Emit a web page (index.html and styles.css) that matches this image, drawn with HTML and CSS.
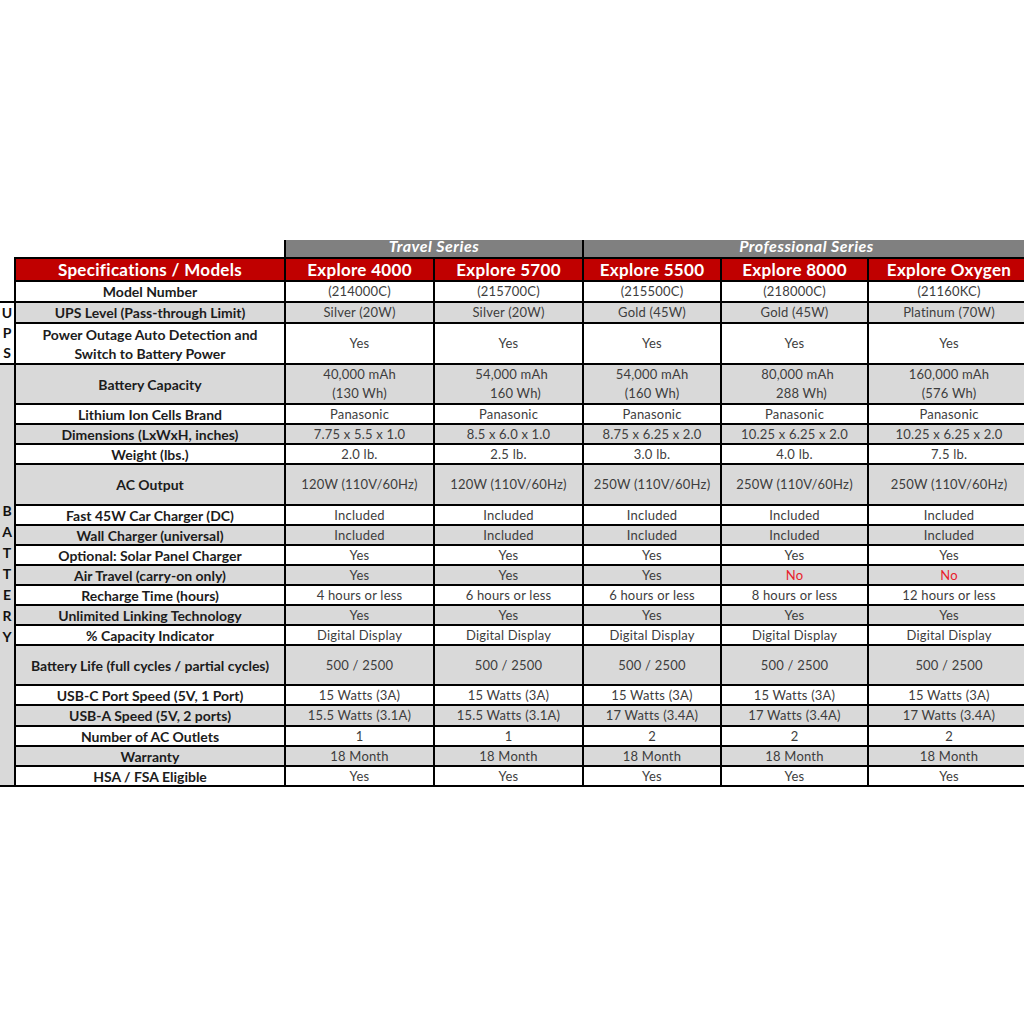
FILE: index.html
```html
<!DOCTYPE html>
<html lang="en">
<head>
<meta charset="utf-8">
<title>Explore Series Specifications</title>
<link rel="stylesheet" href="styles.css">
</head>
<body>
<table class="spec">
  <colgroup>
    <col class="c-side">
    <col class="c-label">
    <col class="c-a">
    <col class="c-b">
    <col class="c-c">
    <col class="c-d">
    <col class="c-e">
  </colgroup>
  <tr class="series">
    <td class="blank" colspan="2"></td>
    <td class="series-cell" colspan="2">Travel Series</td>
    <td class="series-cell" colspan="3">Professional Series</td>
  </tr>
  <tr class="models">
    <td class="blank"></td>
    <th>Specifications / Models</th>
    <th>Explore 4000</th>
    <th>Explore 5700</th>
    <th>Explore 5500</th>
    <th>Explore 8000</th>
    <th>Explore Oxygen</th>
  </tr>
  <tr class="w h21">
    <td class="blank"></td>
    <td class="label">Model Number</td>
    <td>(214000C)</td><td>(215700C)</td><td>(215500C)</td><td>(218000C)</td><td>(21160KC)</td>
  </tr>
  <tr class="g h21">
    <td class="side side-ups" rowspan="2">U<br>P<br>S</td>
    <td class="label">UPS Level (Pass-through Limit)</td>
    <td>Silver (20W)</td><td>Silver (20W)</td><td>Gold (45W)</td><td>Gold (45W)</td><td>Platinum (70W)</td>
  </tr>
  <tr class="w h40">
    <td class="label two">Power Outage Auto Detection and<br>Switch to Battery Power</td>
    <td>Yes</td><td>Yes</td><td>Yes</td><td>Yes</td><td>Yes</td>
  </tr>
  <tr class="g h40">
    <td class="side side-bat" rowspan="18">B<br>A<br>T<br>T<br>E<br>R<br>Y</td>
    <td class="label">Battery Capacity</td>
    <td class="two">40,000 mAh<br>(130 Wh)</td>
    <td class="two shift">54,000 mAh<br><span class="indent">160 Wh)</span></td>
    <td class="two">54,000 mAh<br>(160 Wh)</td>
    <td class="two shift">80,000 mAh<br><span class="indent">288 Wh)</span></td>
    <td class="two">160,000 mAh<br>(576 Wh)</td>
  </tr>
  <tr class="w h20">
    <td class="label">Lithium Ion Cells Brand</td>
    <td>Panasonic</td><td>Panasonic</td><td>Panasonic</td><td>Panasonic</td><td>Panasonic</td>
  </tr>
  <tr class="g h20">
    <td class="label">Dimensions (LxWxH, inches)</td>
    <td>7.75 x 5.5 x 1.0</td><td>8.5 x 6.0 x 1.0</td><td>8.75 x 6.25 x 2.0</td><td>10.25 x 6.25 x 2.0</td><td>10.25 x 6.25 x 2.0</td>
  </tr>
  <tr class="w h20">
    <td class="label">Weight (lbs.)</td>
    <td>2.0 lb.</td><td>2.5 lb.</td><td>3.0 lb.</td><td>4.0 lb.</td><td>7.5 lb.</td>
  </tr>
  <tr class="g h41">
    <td class="label">AC Output</td>
    <td>120W (110V/60Hz)</td><td>120W (110V/60Hz)</td><td>250W (110V/60Hz)</td><td>250W (110V/60Hz)</td><td>250W (110V/60Hz)</td>
  </tr>
  <tr class="w h20">
    <td class="label">Fast 45W Car Charger (DC)</td>
    <td>Included</td><td>Included</td><td>Included</td><td>Included</td><td>Included</td>
  </tr>
  <tr class="g h20">
    <td class="label">Wall Charger (universal)</td>
    <td>Included</td><td>Included</td><td>Included</td><td>Included</td><td>Included</td>
  </tr>
  <tr class="w h20">
    <td class="label">Optional: Solar Panel Charger</td>
    <td>Yes</td><td>Yes</td><td>Yes</td><td>Yes</td><td>Yes</td>
  </tr>
  <tr class="g h20">
    <td class="label">Air Travel (carry-on only)</td>
    <td>Yes</td><td>Yes</td><td>Yes</td><td class="no">No</td><td class="no">No</td>
  </tr>
  <tr class="w h20">
    <td class="label">Recharge Time (hours)</td>
    <td>4 hours or less</td><td>6 hours or less</td><td>6 hours or less</td><td>8 hours or less</td><td>12 hours or less</td>
  </tr>
  <tr class="g h20">
    <td class="label">Unlimited Linking Technology</td>
    <td>Yes</td><td>Yes</td><td>Yes</td><td>Yes</td><td>Yes</td>
  </tr>
  <tr class="w h20">
    <td class="label">% Capacity Indicator</td>
    <td>Digital Display</td><td>Digital Display</td><td>Digital Display</td><td>Digital Display</td><td>Digital Display</td>
  </tr>
  <tr class="g h40">
    <td class="label">Battery Life (full cycles / partial cycles)</td>
    <td>500 / 2500</td><td>500 / 2500</td><td>500 / 2500</td><td>500 / 2500</td><td>500 / 2500</td>
  </tr>
  <tr class="w h20">
    <td class="label">USB-C Port Speed (5V, 1 Port)</td>
    <td>15 Watts (3A)</td><td>15 Watts (3A)</td><td>15 Watts (3A)</td><td>15 Watts (3A)</td><td>15 Watts (3A)</td>
  </tr>
  <tr class="g h21">
    <td class="label">USB-A Speed (5V, 2 ports)</td>
    <td>15.5 Watts (3.1A)</td><td>15.5 Watts (3.1A)</td><td>17 Watts (3.4A)</td><td>17 Watts (3.4A)</td><td>17 Watts (3.4A)</td>
  </tr>
  <tr class="w h20">
    <td class="label">Number of AC Outlets</td>
    <td>1</td><td>1</td><td>2</td><td>2</td><td>2</td>
  </tr>
  <tr class="g h20">
    <td class="label">Warranty</td>
    <td>18 Month</td><td>18 Month</td><td>18 Month</td><td>18 Month</td><td>18 Month</td>
  </tr>
  <tr class="w h20">
    <td class="label">HSA / FSA Eligible</td>
    <td>Yes</td><td>Yes</td><td>Yes</td><td>Yes</td><td>Yes</td>
  </tr>
</table>
</body>
</html>
```

FILE: styles.css
```css
html, body {
  margin: 0;
  padding: 0;
  background: #ffffff;
  overflow: hidden;
}

body {
  font-family: Lato, "Open Sans", "Liberation Sans", sans-serif;
  color: #3d3d3d;
}

.spec {
  border-collapse: collapse;
  table-layout: fixed;
  width: 1030px;
  margin-top: 240px;
}

.c-side { width: 15px; }
.c-label { width: 270px; }
.c-a { width: 149px; }
.c-b { width: 149px; }
.c-c { width: 138px; }
.c-d { width: 147px; }
.c-e { width: 162px; }

.spec td,
.spec th {
  padding: 0;
  border: 2px solid #000;
  text-align: center;
  vertical-align: middle;
  font-size: 13px;
  letter-spacing: 0.2px;
  line-height: 17px;
  white-space: nowrap;
  overflow: hidden;
}

.spec td.two {
  line-height: 19px;
}

.spec td.blank {
  border: none;
  background: transparent;
}

.series { height: 18px; }

.spec td.series-cell {
  background: #808080;
  color: #ffffff;
  font-weight: 700;
  font-style: italic;
  font-size: 16px;
  letter-spacing: 0.5px;
  line-height: 12px;
  vertical-align: top;
  overflow: visible;
  border-top: none;
}

.models { height: 23px; }

.spec .models th {
  background: #c00000;
  color: #ffffff;
  font-weight: 700;
  font-size: 17px;
  letter-spacing: 0.3px;
  line-height: 19px;
}

.h20 { height: 20px; }
.h21 { height: 21px; }
.h40 { height: 40px; }
.h41 { height: 41px; }

.w td { background: #ffffff; }
.g td { background: #d9d9d9; }

.spec td.label {
  color: #1c1c1c;
  font-weight: 700;
  font-size: 14px;
  letter-spacing: 0;
}

.spec td.side {
  border-left: none;
  color: #111;
  font-weight: 700;
  font-size: 14px;
  letter-spacing: 0;
  line-height: 20px;
}

.spec td.side-ups { background: #ffffff; }

.spec td.side-bat {
  background: #d9d9d9;
  line-height: 21px;
  padding-bottom: 4px;
}

.spec td.no { color: #e8212b; }

.spec td.shift { padding-left: 6px; }

.indent { padding-left: 8px; }
```
